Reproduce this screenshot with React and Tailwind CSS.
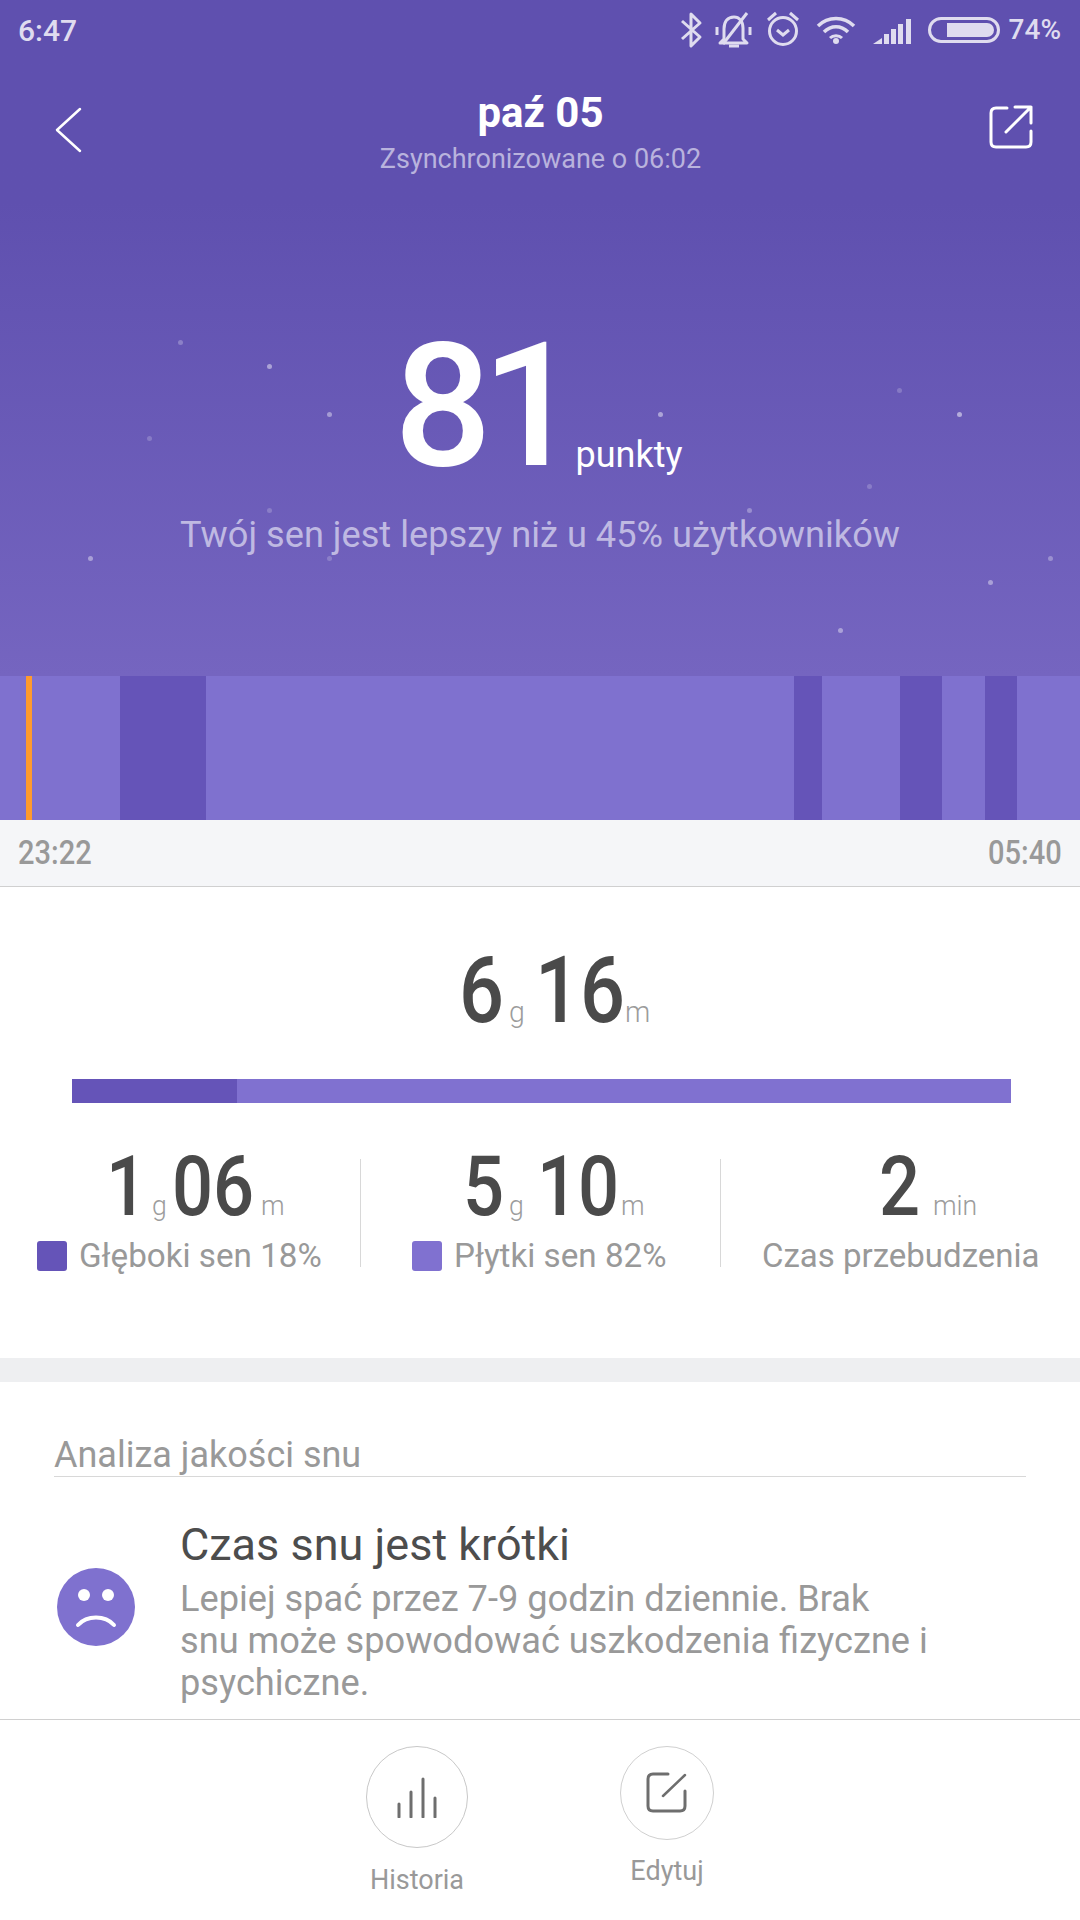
const stars = [[180,342,.25],[269,366,.45],[329,414,.4],[660,414,.45],[149,438,.2],[899,390,.2],[959,414,.5],[869,486,.2],[269,510,.2],[749,510,.3],[90,558,.4],[329,558,.2],[1050,558,.3],[990,582,.4],[840,630,.4]];

function StatusIcons() {
  return (
    <svg width="320" height="40" viewBox="0 0 320 40" fill="none" stroke="#dfdcef" strokeWidth="3" className="block">
      <path d="M3 11 L21 27 L12 36 V4 L21 13 L3 29" strokeLinejoin="round"/>
      <g transform="translate(37,0)">
        <path d="M8 29 V19 C8 11 12 7 18 7 C23 7 27 11 27 18 V29 L31 33 H4 Z" strokeLinejoin="round"/>
        <path d="M13 36 H23" strokeWidth="3"/>
        <path d="M7 34 L31 3"/>
        <path d="M1 17 V25 M34 17 V25"/>
      </g>
      <g transform="translate(88,0)">
        <circle cx="16" cy="21" r="13.5"/>
        <path d="M10 20 L16 25 L22 20"/>
        <path d="M1 10 L9 3 M31 10 L23 3"/>
      </g>
      <g transform="translate(138,0)">
        <path d="M1 16 C11 6 27 6 37 16" strokeWidth="3.5"/>
        <path d="M7 22 C14 15 24 15 31 22" strokeWidth="3.5"/>
        <path d="M13 28 C16 25 22 25 25 28" strokeWidth="3"/>
        <circle cx="19" cy="31" r="3" fill="#dfdcef" stroke="none"/>
      </g>
      <g transform="translate(194,0)" fill="#dfdcef" stroke="none">
        <path d="M0 34 L9 28 V34 Z"/>
        <rect x="11" y="24" width="5" height="10"/>
        <rect x="18" y="19" width="5" height="15"/>
        <rect x="25" y="14" width="5" height="20"/>
        <rect x="33" y="9" width="5" height="25"/>
      </g>
    </svg>
  );
}

function Unit({ children, width, left, size = 'text-[30px]' }) {
  return (
    <span className={`${width} ${left} shrink-0 inline-block`}>
      <span className={`inline-block origin-left scale-x-[0.95] font-light text-[#9c9c9c] leading-none ${size}`}>{children}</span>
    </span>
  );
}

function Num({ children, width, left = '', size }) {
  return (
    <span className={`${width} ${left} shrink-0 inline-block`}>
      <span className={`inline-block origin-left scale-x-[0.86] font-medium text-[#4a4a4a] leading-none ${size}`}>{children}</span>
    </span>
  );
}

export default function App() {
  return (
    <div className="w-[1080px] h-[1920px] bg-white flex flex-col font-['Roboto'] overflow-hidden">
      <div className="relative h-[676px] shrink-0 bg-gradient-to-b from-[#5f50af] from-30% to-[#7565c0]">
        {stars.map(([x, y, o], i) => (
          <span key={i} className="absolute w-[5px] h-[5px] rounded-full bg-white" style={{ left: x - 2, top: y - 2, opacity: o }} />
        ))}
        <div className="relative flex items-center h-[60px] pl-[18px] pr-[19px]">
          <span className="text-[30px] font-medium text-[#dfdcef]">6:47</span>
          <div className="ml-auto flex items-center">
            <div className="mt-[-1px]"><StatusIcons /></div>
            <div className="ml-[-71px] w-[72px] h-[26px] rounded-full border-[3px] border-[#dfdcef] flex justify-end p-[3px]">
              <div className="w-[47px] h-full rounded-r-full bg-[#dfdcef]" />
            </div>
            <span className="ml-[9px] text-[28px] font-medium text-[#dfdcef]">74%</span>
          </div>
        </div>
        <div className="relative flex items-start justify-between pl-[54px] pr-[47px] pt-[45px]">
          <svg width="28" height="46" viewBox="0 0 28 46" fill="none" stroke="white" strokeWidth="2.5" strokeLinecap="round" strokeLinejoin="round" className="mt-[2px]">
            <path d="M26 2 L3 23 L26 44" />
          </svg>
          <div className="flex flex-col items-center pl-[10px]">
            <span className="text-[42px] leading-[44px] font-bold text-white mt-[-14px]">paź 05</span>
            <span className="text-[27px] leading-[30px] text-[#b9b3dd] mt-[9px]">Zsynchronizowane o 06:02</span>
          </div>
          <svg width="44" height="44" viewBox="0 0 44 44" fill="none" stroke="white" strokeWidth="3" strokeLinecap="round" strokeLinejoin="round">
            <path d="M18 3 H7 Q2 3 2 8 V37 Q2 42 7 42 H37 Q42 42 42 37 V26" />
            <path d="M17 27 L42 2 M26 2 H42 V18" />
          </svg>
        </div>
        <div className="relative flex items-baseline mt-[144px] pl-[394px]">
          <span className="text-[172px] leading-[176px] text-white font-medium tracking-[-10px]">81</span>
          <span className="text-[36px] text-white ml-[6px] translate-y-[2px]">punkty</span>
        </div>
        <p className="relative text-center text-[36.2px] text-[#bfb9e2] mt-[14px]">Twój sen jest lepszy niż u 45% użytkowników</p>
      </div>

      <div className="relative flex h-[144px] shrink-0 bg-[#7f71cf]">
        <div className="w-[26px] shrink-0" />
        <div className="w-[6px] shrink-0 bg-[#ff9a2e]" />
        <div className="w-[88px] shrink-0" />
        <div className="w-[86px] shrink-0 bg-[#6554b8]" />
        <div className="w-[588px] shrink-0" />
        <div className="w-[28px] shrink-0 bg-[#6554b8]" />
        <div className="w-[78px] shrink-0" />
        <div className="w-[42px] shrink-0 bg-[#6554b8]" />
        <div className="w-[43px] shrink-0" />
        <div className="w-[32px] shrink-0 bg-[#6554b8]" />
      </div>

      <div className="flex items-center justify-between h-[67px] shrink-0 px-[18px] bg-[#f5f6f8] border-b border-[#d0d0d0] text-[33px] font-medium text-[#999999]">
        <span className="inline-block origin-left scale-x-[0.88]">23:22</span>
        <span className="inline-block origin-right scale-x-[0.88]">05:40</span>
      </div>

      <div className="flex items-baseline h-[112px] mt-[58px] shrink-0 pl-[459px]">
        <Num size="text-[92px]" width="w-[42px]">6</Num>
        <Unit width="w-[22px]" left="ml-[8px]">g</Unit>
        <Num size="text-[92px]" width="w-[84px]" left="ml-[4px]">16</Num>
        <Unit width="w-[26px]" left="ml-[6px]">m</Unit>
      </div>

      <div className="flex h-[24px] ml-[72px] w-[939px] shrink-0 mt-[22px] bg-[#8071d0]">
        <div className="w-[165px] bg-[#6554b8]" />
      </div>

      <div className="flex mt-[42px] shrink-0 h-[112px]">
        <div className="w-[360px] flex flex-col">
          <div className="flex items-baseline h-[74px] pl-[106px]">
            <Num size="text-[84px]" width="w-[38px]">1</Num>
            <Unit width="w-[20px]" left="ml-[8px]" size="text-[28px]">g</Unit>
            <Num size="text-[84px]" width="w-[82px]" left="ml-[0px]">06</Num>
            <Unit width="w-[26px]" left="ml-[7px]" size="text-[28px]">m</Unit>
          </div>
          <div className="flex items-center mt-[12px] pl-[37px] text-[33.2px] text-[#999999] whitespace-nowrap">
            <span className="w-[30px] h-[30px] rounded-[3px] bg-[#6554b8] mr-[12px]" />
            Głęboki sen 18%
          </div>
        </div>
        <div className="w-[360px] border-l border-[#d8d8d8] flex flex-col h-[108px] mt-[14px]">
          <div className="flex items-baseline h-[74px] mt-[-14px] pl-[102px]">
            <Num size="text-[84px]" width="w-[38px]">5</Num>
            <Unit width="w-[20px]" left="ml-[8px]" size="text-[28px]">g</Unit>
            <Num size="text-[84px]" width="w-[76px]" left="ml-[8px]">10</Num>
            <Unit width="w-[26px]" left="ml-[8px]" size="text-[28px]">m</Unit>
          </div>
          <div className="flex items-center mt-[12px] pl-[51px] text-[33.2px] text-[#999999] whitespace-nowrap">
            <span className="w-[30px] h-[30px] rounded-[3px] bg-[#8071d0] mr-[12px]" />
            Płytki sen 82%
          </div>
        </div>
        <div className="w-[360px] border-l border-[#d8d8d8] flex flex-col h-[108px] mt-[14px]">
          <div className="flex items-baseline h-[74px] mt-[-14px] pl-[158px]">
            <Num size="text-[84px]" width="w-[38px]">2</Num>
            <Unit width="w-[52px]" left="ml-[16px]" size="text-[28px]">min</Unit>
          </div>
          <div className="mt-[12px] pl-[41px] text-[33px] text-[#999999] whitespace-nowrap">Czas przebudzenia</div>
        </div>
      </div>

      <div className="h-[24px] shrink-0 bg-[#eeeff1] mt-[101px]" />

      <div className="ml-[54px] w-[972px] mt-[53px] pb-[2px] h-[42px] shrink-0 border-b border-[#d8d8d8] text-[36px] leading-[40px] text-[#999999]">Analiza jakości snu</div>

      <div className="flex shrink-0 pl-[57px]">
        <svg width="78" height="78" viewBox="0 0 78 78" className="mt-[91px] shrink-0">
          <circle cx="39" cy="39" r="39" fill="#7f71cf" />
          <circle cx="27" cy="27" r="6" fill="white" />
          <circle cx="51" cy="27" r="6" fill="white" />
          <path d="M21 57 C30 47 48 47 57 57" fill="none" stroke="white" strokeWidth="4" strokeLinecap="round" />
        </svg>
        <div className="ml-[45px] mt-[44px]">
          <div className="text-[45px] leading-[48px] text-[#4d4d4d] whitespace-nowrap">Czas snu jest krótki</div>
          <div className="text-[36.2px] leading-[42px] text-[#999999] mt-[9px] w-[800px]">
            Lepiej spać przez 7-9 godzin dziennie. Brak<br />snu może spowodować uszkodzenia fizyczne i<br />psychiczne.
          </div>
        </div>
      </div>

      <div className="mt-auto h-[201px] shrink-0 border-t border-[#d0d0d0] flex">
        <div className="w-[102px] ml-[366px] flex flex-col items-center pt-[26px]">
          <div className="w-[102px] h-[102px] shrink-0 rounded-full border border-[#c8c8c8] flex items-center justify-center">
            <svg width="42" height="42" viewBox="0 0 42 42" fill="none" stroke="#6e6e6e" strokeWidth="3" strokeLinecap="round">
              <path d="M3 41 V28 M15 41 V16 M27 41 V3 M39 41 V22" />
            </svg>
          </div>
          <span className="text-[27px] leading-[30px] text-[#999999] mt-[17px] whitespace-nowrap">Historia</span>
        </div>
        <div className="w-[94px] ml-[152px] flex flex-col items-center pt-[26px]">
          <div className="w-[94px] h-[94px] shrink-0 rounded-full border border-[#d0d0d0] flex items-center justify-center">
            <svg width="42" height="42" viewBox="0 0 42 42" fill="none" stroke="#6e6e6e" strokeWidth="3" strokeLinecap="round" strokeLinejoin="round">
              <path d="M22 2 H7 Q2 2 2 7 V34 Q2 39 7 39 H34 Q39 39 39 34 V19" />
              <path d="M17 24 L39 3" strokeWidth="2.5" />
            </svg>
          </div>
          <span className="text-[27px] leading-[30px] text-[#999999] mt-[16px] whitespace-nowrap">Edytuj</span>
        </div>
      </div>
    </div>
  );
}
